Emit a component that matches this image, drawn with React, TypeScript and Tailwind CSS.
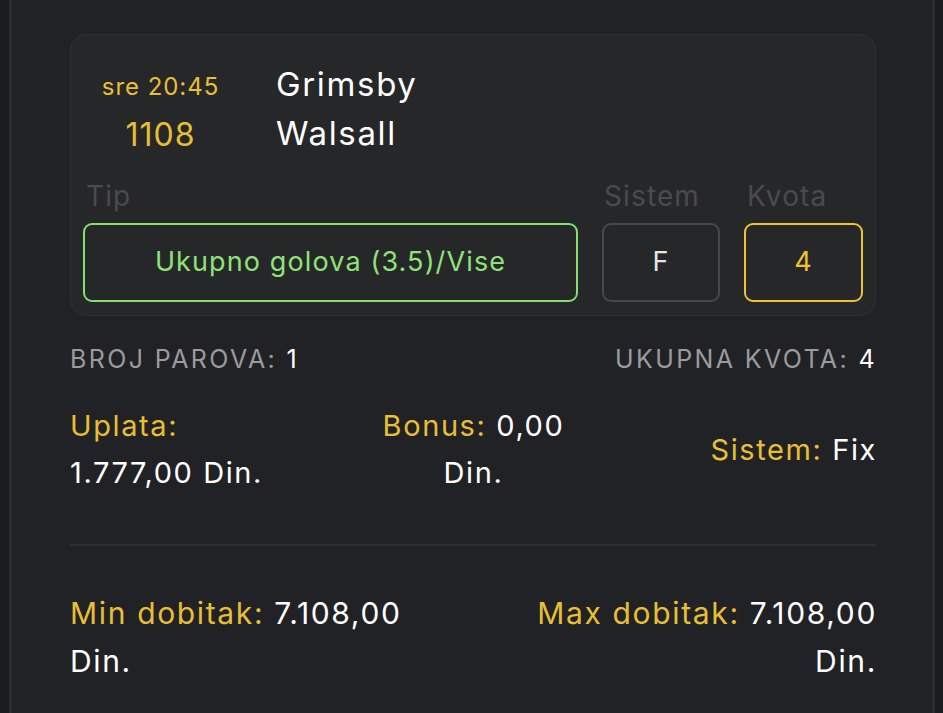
export default function App() {
  return (
    <div className="w-[943px] h-[713px] bg-[#1a1b1e] flex overflow-hidden">
      <div className="ml-[9px] mr-[8px] flex-1 bg-[#212225] border-x-[3px] border-[#2a2b2e] pl-[58px] pr-[55px] pt-[34px] font-['Inter',sans-serif]">
        <div className="mr-[1px] rounded-[16px] bg-[#262729] border border-[#2f3033] px-[12px] pt-[25px] pb-[13px]">
          <div className="flex items-start">
            <div className="w-[155px] flex flex-col items-center text-[#e8bf34] tracking-[0.06em]">
              <span className="mt-[3px] text-[24px] leading-[48px]">sre 20:45</span>
              <span className="text-[32px] leading-[48px]">1108</span>
            </div>
            <div className="ml-[38px] flex flex-col text-white text-[33px] tracking-[0.05em]">
              <span className="leading-[48px]">Grimsby</span>
              <span className="leading-[50px]">Walsall</span>
            </div>
          </div>
          <div className="flex gap-[24px] mt-[14px] text-[28px] tracking-[0.04em]">
            <div className="flex-1 flex flex-col">
              <span className="pl-[3px] leading-[46px] text-[#4a4b4e]">Tip</span>
              <div className="mt-[4px] h-[79px] rounded-[9px] border-2 border-[#83e06c] flex items-center justify-center text-[27px] text-[#8ee377]">
                Ukupno golova (3.5)/Vise
              </div>
            </div>
            <div className="w-[118px] flex flex-col">
              <span className="pl-[2px] leading-[46px] text-[#4a4b4e]">Sistem</span>
              <div className="mt-[4px] h-[79px] rounded-[9px] border-2 border-[#47484b] flex items-center justify-center text-[27px] text-[#e6e6e6]">
                F
              </div>
            </div>
            <div className="w-[119px] flex flex-col">
              <span className="pl-[3px] leading-[46px] text-[#4a4b4e]">Kvota</span>
              <div className="mt-[4px] h-[79px] rounded-[9px] border-2 border-[#f0c232] flex items-center justify-center text-[27px] text-[#f0c232]">
                4
              </div>
            </div>
          </div>
        </div>

        <div className="mt-[26px] flex justify-between text-[25px] leading-[34px] tracking-[0.095em] text-[#9b9b9d]">
          <span>
            BROJ PAROVA: <span className="text-white">1</span>
          </span>
          <span>
            UKUPNA KVOTA: <span className="text-white">4</span>
          </span>
        </div>

        <div className="mt-[26px] grid grid-cols-3 items-center text-[29px] leading-[47px] tracking-[0.055em] text-white">
          <div className="flex flex-col">
            <span className="text-[#e8bf34]">Uplata:</span>
            <span>1.777,00 Din.</span>
          </div>
          <div className="flex flex-col items-center whitespace-nowrap">
            <span>
              <span className="text-[#e8bf34]">Bonus:</span> 0,00
            </span>
            <span>Din.</span>
          </div>
          <div className="text-right whitespace-nowrap">
            <span className="text-[#e8bf34]">Sistem:</span> Fix
          </div>
        </div>

        <div className="mt-[48px] mr-[1px] h-[2px] bg-[#2e2f32]" />

        <div className="mt-[43px] flex justify-between text-[30px] leading-[48px] tracking-[0.055em] text-white">
          <div className="flex flex-col">
            <span>
              <span className="text-[#e8bf34]">Min dobitak:</span> 7.108,00
            </span>
            <span>Din.</span>
          </div>
          <div className="flex flex-col items-end">
            <span>
              <span className="text-[#e8bf34]">Max dobitak:</span> 7.108,00
            </span>
            <span>Din.</span>
          </div>
        </div>
      </div>
    </div>
  );
}
